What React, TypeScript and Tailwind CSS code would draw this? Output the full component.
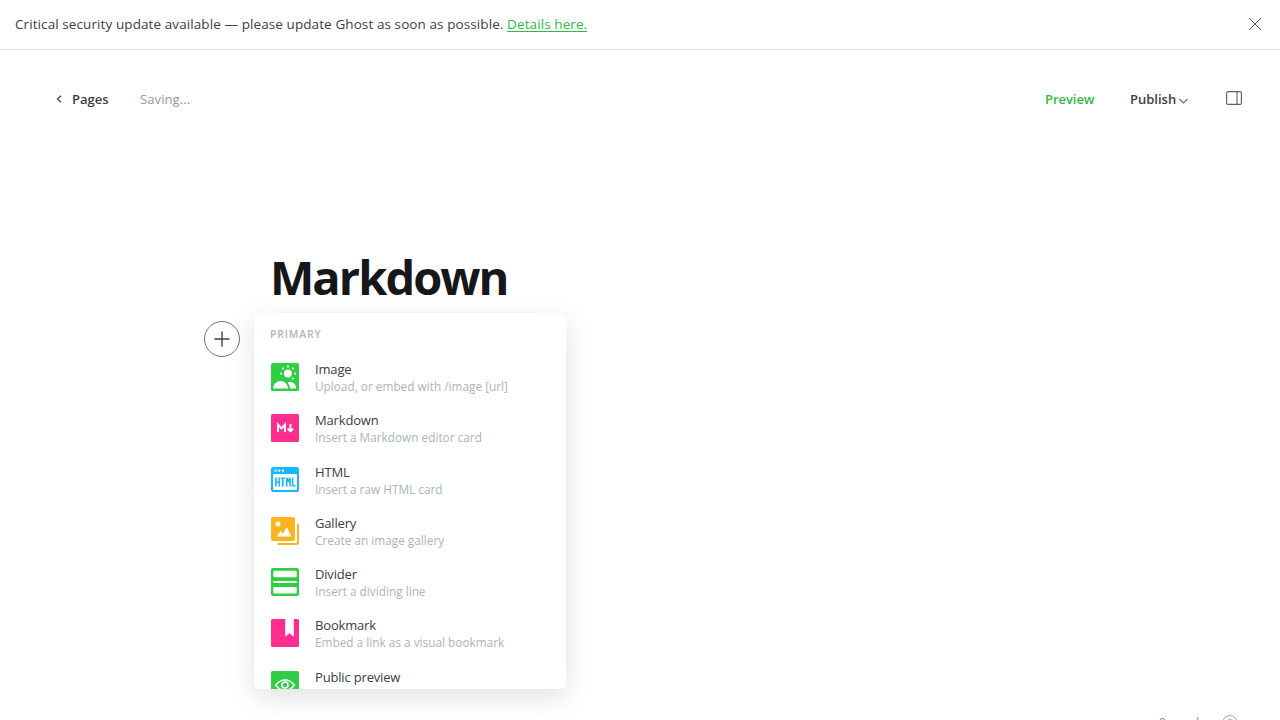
import type { ReactNode } from "react";

function ImageIcon() {
  return (
    <svg viewBox="0 0 28 28" className="size-7">
      <rect width="28" height="28" rx="1.6" fill="#30cf43" />
      <circle cx="16.9" cy="10.6" r="4" fill="#fff" />
      <g fill="#fff">
        <circle cx="16.9" cy="3.6" r="1.1" />
        <circle cx="11.9" cy="5.5" r="1.1" />
        <circle cx="21.9" cy="5.5" r="1.1" />
        <circle cx="9.9" cy="10.6" r="1.1" />
        <circle cx="23.9" cy="10.6" r="1.1" />
        <circle cx="21.9" cy="15.5" r="1.1" />
      </g>
      <path d="M2.2 25.6c0-4.600 3.300-7.600 7.600-7.600 3.900 0 6.700 3.200 7.500 7.600z" fill="#fff" />
      <path d="M16.600 19.400c4.700-1.400 8.600 1.600 8.600 6.200h-6.100c-.3-2.600-1-4.600-2.500-6.200z" fill="#fff" />
    </svg>
  );
}

function MarkdownIcon() {
  return (
    <svg viewBox="0 0 28 28" className="size-7">
      <rect width="28" height="28" rx="1.6" fill="#ff2e8e" />
      <path d="M7 18v-7.500l3.500 4 3.500-4V18" fill="none" stroke="#fff" strokeWidth="1.900" />
      <path d="M19.400 10v7M16.700 14.700l2.700 2.800 2.700-2.800" fill="none" stroke="#fff" strokeWidth="1.900" />
    </svg>
  );
}

function HtmlIcon() {
  return (
    <svg viewBox="0 0 28 28" className="size-7">
      <rect y="1" width="28" height="25" rx="2.600" fill="#15b8ff" />
      <rect x="2" y="8" width="24" height="16" rx="1" fill="#fff" />
      <g fill="#fff">
        <circle cx="4.600" cy="4.700" r="1.100" />
        <circle cx="8.200" cy="4.700" r="1.100" />
        <circle cx="11.800" cy="4.700" r="1.100" />
      </g>
      <path
        d="M4.900 11.500v9M8.300 11.500v9M4.900 16h3.400M9.700 12.300h4.200M11.800 12.300v8.200M15.700 20.500V12l1.700 3.200L19.100 12v8.500M21.600 11.500v8.200h2.900"
        fill="none"
        stroke="#15b8ff"
        strokeWidth="1.600"
      />
    </svg>
  );
}

function GalleryIcon() {
  return (
    <svg viewBox="0 0 28 28" className="size-7">
      <rect width="24" height="24" rx="2" fill="#ffb41f" />
      <path d="M27 7.500V25.500a1.400 1.400 0 0 1-1.400 1.500H7.500" fill="none" stroke="#ffb41f" strokeWidth="2" strokeLinecap="round" />
      <circle cx="7" cy="7" r="2.500" fill="#fff" />
      <path d="M6 19.500l3.400-5.600 2.500 2.600 4.100-6.300 4.200 9.300z" fill="#fff" />
    </svg>
  );
}

function DividerIcon() {
  return (
    <svg viewBox="0 0 28 28" className="size-7">
      <rect width="28" height="28" rx="2" fill="#30cf43" />
      <rect x="2.300" y="2.800" width="23.400" height="6.400" rx="1" fill="#fff" />
      <rect x="2.300" y="13" width="23.400" height="2" fill="#fff" />
      <rect x="2.300" y="19" width="23.400" height="6.400" rx="1" fill="#fff" />
    </svg>
  );
}

function BookmarkIcon() {
  return (
    <svg viewBox="0 0 28 28" className="size-7">
      <rect width="28" height="28" rx="1.600" fill="#ff2e8e" />
      <path d="M14.200 0h8.600v17.700l-4.300-3.400-4.300 3.400z" fill="#fff" />
    </svg>
  );
}

function EyeIcon() {
  return (
    <svg viewBox="0 0 28 28" className="size-7">
      <rect width="28" height="28" rx="1.600" fill="#30cf43" />
      <path d="M4.700 14.200c5.200-7 13.400-7 18.600 0-5.200 7-13.400 7-18.600 0z" fill="none" stroke="#fff" strokeWidth="1.500" />
      <circle cx="14" cy="14" r="3" fill="none" stroke="#fff" strokeWidth="1.600" />
    </svg>
  );
}

type Card = { icon: ReactNode; title: string; text?: string };

const cards: Card[] = [
  { icon: <ImageIcon />, title: "Image", text: "Upload, or embed with /image [url]" },
  { icon: <MarkdownIcon />, title: "Markdown", text: "Insert a Markdown editor card" },
  { icon: <HtmlIcon />, title: "HTML", text: "Insert a raw HTML card" },
  { icon: <GalleryIcon />, title: "Gallery", text: "Create an image gallery" },
  { icon: <DividerIcon />, title: "Divider", text: "Insert a dividing line" },
  { icon: <BookmarkIcon />, title: "Bookmark", text: "Embed a link as a visual bookmark" },
  { icon: <EyeIcon />, title: "Public preview" },
];

export default function App() {
  return (
    <div className="relative flex h-[720px] w-[1280px] flex-col overflow-hidden bg-white font-['Open_Sans','Noto_Sans',sans-serif] text-[#394047]">
      <div className="flex h-[50px] shrink-0 items-center justify-between border-b border-[#dddedf] pr-[18px] pb-[2px] pl-[15px]">
        <p className="text-[13.5px] leading-5 tracking-[0.09px] whitespace-nowrap">
          <span>Critical security update available — please update Ghost as soon as possible. </span>
          <a className="text-[#30b943] underline underline-offset-2">Details here.</a>
        </p>
        <svg viewBox="0 0 14 14" className="size-[14px]" fill="none" stroke="#394047" strokeWidth="0.900">
          <path d="M1 1l12 12M13 1L1 13" />
        </svg>
      </div>

      <header className="mt-[33px] flex h-8 shrink-0 items-center pr-[38px] pl-[56px] text-[13px] leading-5 font-semibold">
        <svg viewBox="0 0 6 8" className="mr-[10px] mb-px h-2 w-[6px]" fill="none" stroke="#394047" strokeWidth="1.200">
          <path d="M5 .7L1.500 4 5 7.300" />
        </svg>
        <span className="w-[68px]">Pages</span>
        <span className="font-normal tracking-[0.1px] text-[#8d9aa7]">Saving...</span>
        <span className="ml-auto w-[85px] tracking-[-0.05px] text-[#30b943]">Preview</span>
        <span className="w-[49px]">Publish</span>
        <svg viewBox="0 0 9 6" className="mt-[3px] mr-[38px] h-[6px] w-[9px]" fill="none" stroke="#626d79" strokeWidth="1.100">
          <path d="M.5 1l4 4 4-4" />
        </svg>
        <svg viewBox="0 0 16 14" className="mb-[2px] h-[14px] w-4" fill="none" stroke="#555f69" strokeWidth="1.100">
          <rect x=".6" y=".6" width="14.800" height="12.800" rx="1.500" />
          <path d="M11 .6v12.800" />
        </svg>
      </header>

      <main className="flex flex-col pt-[129px] pl-[204px]">
        <h1 className="h-[69px] pl-[66px] text-[47px] leading-[66px] font-bold tracking-[-1.95px] whitespace-nowrap text-[#15171a]">Markdown</h1>
        <div className="flex items-start">
          <button className="mt-2 flex size-9 items-center justify-center rounded-full border border-[#6b727b]">
            <svg viewBox="0 0 16 16" className="size-4" fill="none" stroke="#394047" strokeWidth="1.400">
              <path d="M8 .5v15M.5 8h15" />
            </svg>
          </button>
          <div className="ml-[14px] h-[376px] w-[312px] overflow-hidden rounded-[5px] bg-white shadow-[0_0_1px_rgba(0,0,0,.05),0_8px_28px_rgba(0,0,0,.12)]">
            <div className="h-[38.4px] pt-[11px] pl-4 text-[10.5px] leading-5 font-semibold tracking-[0.8px] text-[#aeb7c1]">PRIMARY</div>
            {cards.map((card) => (
              <div key={card.title} className="flex h-[51.25px] items-center pl-[17px]">
                {card.icon}
                <div className="ml-4 whitespace-nowrap">
                  <div className="text-[13px] leading-[18px] tracking-[-0.17px]">{card.title}</div>
                  <div className="h-4 text-[11.75px] leading-[17px] tracking-[0.03px] text-[#abb4be]">{card.text}</div>
                </div>
              </div>
            ))}
          </div>
        </div>
      </main>

      <div className="absolute top-[714px] right-[42px] flex h-[18px] items-center">
        <span className="mr-[17px] text-[12.5px] leading-[18px] text-[#7c8b9a]">0 words</span>
        <svg viewBox="0 0 16 16" className="size-4" fill="none" stroke="#9aa6b2" strokeWidth="1">
          <circle cx="8" cy="8" r="7.400" />
          <path d="M6 6.400a2 2 0 1 1 2.800 1.800q-.8.400-.8 1.400M8 11v1" />
        </svg>
      </div>
    </div>
  );
}
